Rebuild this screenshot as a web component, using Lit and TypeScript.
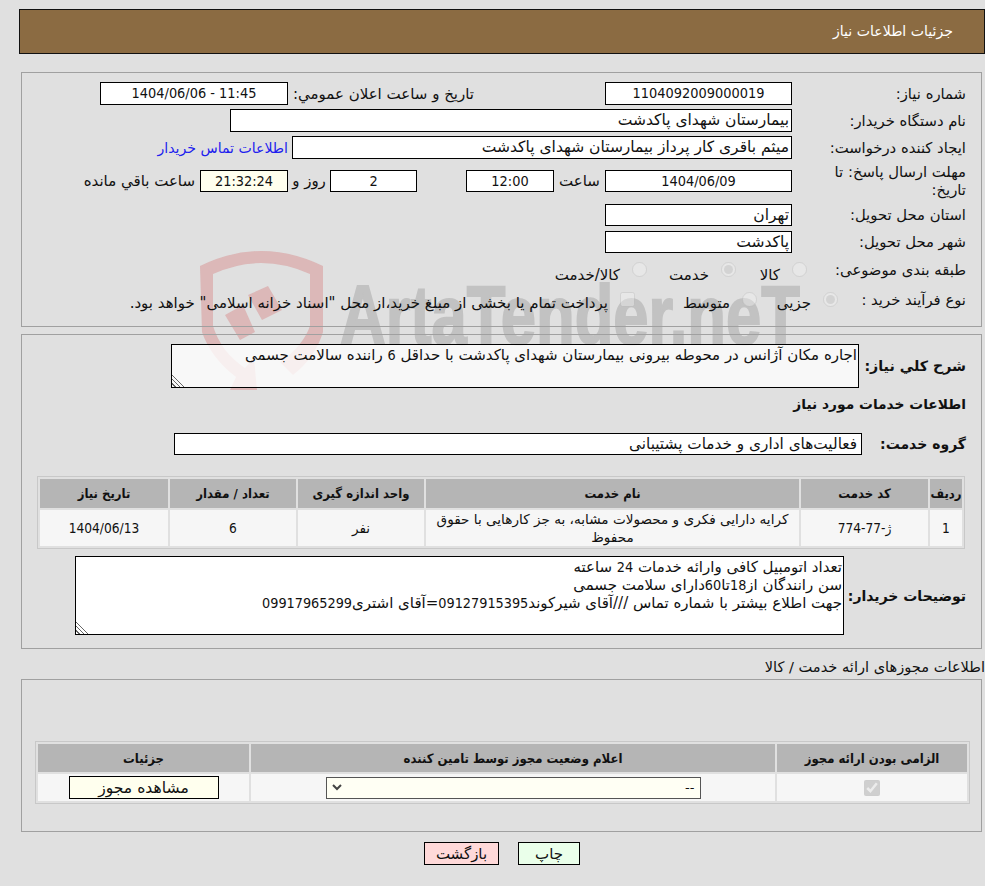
import { LitElement, html, css } from "lit";
import { customElement } from "lit/decorators.js";

const CHEVRON =
  "data:image/svg+xml,%3Csvg xmlns='http://www.w3.org/2000/svg' width='10' height='7'%3E%3Cpath d='M1 1l4 4 4-4' fill='none' stroke='%23444' stroke-width='2'/%3E%3C/svg%3E";

@customElement("app-root")
export class AppRoot extends LitElement {
  static styles = css`
    :host {
      display: block;
      position: relative;
      width: 985px;
      height: 886px;
      overflow: hidden;
      background: #e0e0e0;
      color: #111;
      direction: rtl;
      font-family: "DejaVu Sans", sans-serif;
      font-size: 15px;
    }
    .num {
      font-family: "DejaVu Sans Condensed", "DejaVu Sans", sans-serif;
      font-size: 14.3px;
    }
    .mark {
      position: absolute;
      left: 190px;
      top: 240px;
      width: 620px;
      height: 160px;
      direction: ltr;
    }
    .mark text {
      font-family: "Liberation Sans", sans-serif;
      font-weight: 700;
      font-size: 84px;
      fill: #c2c2c2;
      stroke: #c2c2c2;
      stroke-width: 2px;
    }
    .page {
      position: relative;
      padding-top: 9px;
    }
    .title {
      box-sizing: border-box;
      height: 45px;
      margin: 0 0 0 19px;
      padding: 0 31px;
      line-height: 43px;
      border: 1px solid #111;
      background: #8b6b42;
      color: #fff;
      font-size: 14.1px;
    }
    .panel {
      box-sizing: border-box;
      margin: 0 3px 0 21px;
      border: 1px solid #a0a0a0;
    }
    .top {
      height: 255px;
      margin-top: 18px;
      padding: 9px 15px 0 0;
    }
    .row {
      display: flex;
      align-items: center;
      height: 23px;
      margin-bottom: 4px;
    }
    .label {
      flex: none;
      width: 174px;
      line-height: 18px;
      font-size: 14.8px;
      white-space: nowrap;
    }
    .box {
      flex: none;
      box-sizing: border-box;
      height: 23px;
      line-height: 21px;
      padding: 0 2px;
      border: 1px solid #000;
      background: #fff;
      font-size: 15.5px;
      white-space: nowrap;
      overflow: hidden;
    }
    .box.num {
      font-size: 14.4px;
    }
    .box.h22 {
      height: 22px;
      line-height: 20px;
    }
    .short {
      height: 22px;
      margin-bottom: 5px;
    }
    .center {
      text-align: center;
    }
    .cream {
      background: #ffffee;
    }
    .w187 {
      width: 187px;
    }
    .w88 {
      width: 88px;
    }
    .after {
      margin-right: 5px;
    }
    .link {
      margin-right: 4px;
      color: #2020ee;
      font-size: 14.1px;
    }
    .deadline {
      height: 36px;
      margin-bottom: 5px;
    }
    .choice {
      display: flex;
      align-items: center;
      height: 23px;
    }
    .choice input {
      flex: none;
      width: 15px;
      height: 15px;
      margin: 0;
      opacity: 0.55;
    }
    .choice span {
      position: relative;
      top: 5px;
      margin-right: 12px;
      white-space: nowrap;
    }
    .choice.low span {
      top: 3px;
    }
    .main {
      height: 315px;
      margin-top: 7px;
      padding: 9px 15px 0 16px;
    }
    .bold {
      flex: none;
      font-weight: 700;
      font-size: 14px;
      white-space: nowrap;
    }
    .wide {
      display: flex;
      align-items: center;
    }
    .area {
      box-sizing: border-box;
      padding: 1px 1px 0;
      border: 1px solid #000;
      color: #111;
      line-height: 18px;
      overflow: hidden;
      resize: both;
      white-space: nowrap;
    }
    .area::-webkit-resizer {
      background: linear-gradient(
        45deg,
        transparent 2px,
        #666 2px 3px,
        transparent 3px 5px,
        #666 5px 6px,
        transparent 6px 8px,
        #666 8px 9px,
        transparent 9px
      );
    }
    .need {
      width: 688px;
      height: 44px;
      background: rgba(255, 255, 255, 0.78);
    }
    .subhead {
      margin: 6px 0 0;
      line-height: 20px;
      font-size: 13.8px;
    }
    .group {
      margin-top: 19px;
    }
    .group .box {
      width: 688px;
      height: 22px;
      line-height: 20px;
      padding: 0 4px;
      font-size: 15.3px;
    }
    table {
      box-sizing: border-box;
      border: 1px solid #c8c8c8;
      border-spacing: 2px;
      border-collapse: separate;
      table-layout: fixed;
    }
    th {
      padding: 0;
      background: #b5b5b5;
      font-family: "DejaVu Sans Condensed", "DejaVu Sans", sans-serif;
      font-size: 13px;
      font-weight: 700;
    }
    td {
      padding: 0 3px;
      background: #f6f6f6;
      font-size: 13.6px;
      text-align: center;
      line-height: 18px;
    }
    td.num {
      font-size: 13.6px;
    }
    .services {
      width: 928px;
      margin: 21px 1px 0 0;
    }
    .services th {
      height: 29px;
    }
    .services td {
      height: 36px;
    }
    .notes-row {
      margin-top: 7px;
    }
    .notes {
      width: 769px;
      height: 79px;
      background: #fff;
    }
    .permits-title {
      height: 30px;
      line-height: 35px;
      font-size: 14.6px;
      white-space: nowrap;
    }
    .permits {
      height: 153px;
      padding: 61px 11px 0 13px;
    }
    .permits table {
      width: 935px;
    }
    .permits th {
      height: 28px;
    }
    .permits td {
      height: 27px;
      padding: 0;
    }
    .permits input {
      display: block;
      width: 16px;
      height: 16px;
      margin: 0 auto;
    }
    select {
      display: block;
      box-sizing: border-box;
      width: 375px;
      height: 22px;
      margin: 0 auto;
      padding: 0 5px;
      border: 1px solid #555;
      border-radius: 0;
      appearance: none;
      background: #fffff4 no-repeat 5px center;
      color: #111;
      font: inherit;
      font-size: 13px;
    }
    .view {
      display: block;
      width: 150px;
      height: 23px;
      margin: 0 auto;
      padding: 0;
      border: 1px solid #000;
      background: #ffffee;
      color: #111;
      font: inherit;
      font-size: 15.6px;
    }
    .actions {
      display: flex;
      justify-content: center;
      gap: 19px;
      margin-top: 10px;
      padding-left: 19px;
    }
    .actions button {
      box-sizing: border-box;
      height: 23px;
      padding: 0;
      border: 1px solid #000;
      color: #111;
      font: inherit;
    }
    .print {
      width: 62px;
      background: #eaffea;
    }
    .back {
      width: 75px;
      background: #ffd9d9;
    }
  `;

  render() {
    return html`
      <svg class="mark" viewBox="0 0 620 160" aria-hidden="true">
        <path
          d="M10 26 Q71 -4 133 26 L133 92 Q125 118 103 135 L90 122 Q113 106 120 86 L120 34 Q71 12 23 34 L23 86 Q31 112 55 128 L64 118 L67 150 L40 150 L46 137 Q21 118 12 92 Z"
          fill="#d88f8f"
          opacity="0.5"
        />
        <path d="M35 75 L53 65 L65 92 L50 100 Z M58 55 L78 46 L92 70 L72 80 Z" fill="#d88f8f" opacity="0.5" />
        <text x="150" y="104" textLength="460" lengthAdjust="spacingAndGlyphs">ArtaTender.neT</text>
      </svg>
      <div class="page">
        <div class="title">جزئیات اطلاعات نیاز</div>

        <div class="panel top">
          <div class="row">
            <div class="label">شماره نیاز:</div>
            <div class="box w187 center num">1104092009000019</div>
            <div style="width:131px"></div>
            <div style="width:186px">تاریخ و ساعت اعلان عمومي:</div>
            <div class="box center num" style="width:188px">11:45 - 1404/06/06</div>
          </div>
          <div class="row">
            <div class="label">نام دستگاه خریدار:</div>
            <div class="box" style="width:562px">بیمارستان شهدای پاکدشت</div>
          </div>
          <div class="row">
            <div class="label">ایجاد کننده درخواست:</div>
            <div class="box" style="width:500px">میثم باقری کار پرداز بیمارستان شهدای پاکدشت</div>
            <div class="link">اطلاعات تماس خریدار</div>
          </div>
          <div class="row deadline">
            <div class="label">مهلت ارسال پاسخ: تا<br />تاریخ:</div>
            <div class="box w187 center num h22">1404/06/09</div>
            <div style="width:51px;text-align:center">ساعت</div>
            <div class="box w88 center num h22">12:00</div>
            <div style="width:49px"></div>
            <div class="box center num h22" style="width:87px">2</div>
            <div style="width:42px;text-align:center">روز و</div>
            <div class="box w88 center cream num h22">21:32:24</div>
            <div class="after">ساعت باقي مانده</div>
          </div>
          <div class="row short">
            <div class="label">استان محل تحویل:</div>
            <div class="box w187 h22">تهران</div>
          </div>
          <div class="row short">
            <div class="label">شهر محل تحویل:</div>
            <div class="box w187 h22">پاکدشت</div>
          </div>
          <div class="row" style="margin-top:5px">
            <div class="label" style="width:159px">طبقه بندی موضوعی:</div>
            <div class="choice">
              <input type="radio" disabled />
              <span style="width:44px">کالا</span>
              <input type="radio" checked disabled />
              <span style="width:62px">خدمت</span>
              <input type="radio" disabled />
              <span>کالا/خدمت</span>
            </div>
          </div>
          <div class="row" style="margin-top:7px">
            <div class="label" style="width:128px">نوع فرآیند خرید :</div>
            <div class="choice low">
              <input type="radio" checked disabled />
              <span style="width:54px">جزیی</span>
              <input type="radio" disabled />
              <span style="width:95px">متوسط</span>
              <input type="checkbox" disabled />
              <span>پرداخت تمام یا بخشی از مبلغ خرید،از محل "اسناد خزانه اسلامی" خواهد بود.</span>
            </div>
          </div>
        </div>

        <div class="panel main">
          <div class="wide">
            <div class="bold" style="width:107px;font-size:14.2px">شرح کلي نیاز:</div>
            <div class="area need">
              اجاره مکان آژانس در محوطه بیرونی بیمارستان شهدای پاکدشت با حداقل <span class="num">6</span> راننده سالامت جسمی
            </div>
          </div>
          <div class="bold subhead">اطلاعات خدمات مورد نیاز</div>
          <div class="wide group">
            <div class="bold" style="width:104px">گروه خدمت:</div>
            <div class="box">فعالیت‌های اداری و خدمات پشتیبانی</div>
          </div>
          <table class="services">
            <colgroup>
              <col style="width:32px" />
              <col style="width:127px" />
              <col style="width:373px" />
              <col style="width:126px" />
              <col style="width:126px" />
              <col />
            </colgroup>
            <tr>
              <th>ردیف</th>
              <th>کد خدمت</th>
              <th>نام خدمت</th>
              <th>واحد اندازه گیری</th>
              <th>تعداد / مقدار</th>
              <th>تاریخ نیاز</th>
            </tr>
            <tr>
              <td class="num">1</td>
              <td class="num">ژ-77-774</td>
              <td>کرایه دارایی فکری و محصولات مشابه، به جز کارهایی با حقوق محفوظ</td>
              <td>نفر</td>
              <td class="num">6</td>
              <td class="num">1404/06/13</td>
            </tr>
          </table>
          <div class="wide notes-row">
            <div class="bold" style="width:122px">توضیحات خریدار:</div>
            <div class="area notes">
              <div>تعداد اتومبیل کافی وارائه خدمات <span class="num">24</span> ساعته</div>
              <div>سن رانندگان از<span class="num">18</span>تا<span class="num">60</span>دارای سلامت جسمی</div>
              <div>جهت اطلاع بیشتر با شماره تماس ///آقای شیرکوند<span class="num">09127915395</span>=آقای اشتری<span class="num">09917965299</span></div>
            </div>
          </div>
        </div>

        <div class="permits-title">اطلاعات مجوزهای ارائه خدمت / کالا</div>
        <div class="panel permits">
          <table>
            <colgroup>
              <col style="width:190px" />
              <col style="width:524px" />
              <col />
            </colgroup>
            <tr>
              <th>الزامی بودن ارائه مجوز</th>
              <th>اعلام وضعیت مجوز توسط تامین کننده</th>
              <th>جزئیات</th>
            </tr>
            <tr>
              <td><input type="checkbox" checked disabled /></td>
              <td>
                <select style="background-image:url(&quot;${CHEVRON}&quot;)"><option>--</option></select>
              </td>
              <td><button class="view">مشاهده مجوز</button></td>
            </tr>
          </table>
        </div>

        <div class="actions">
          <button class="print">چاپ</button>
          <button class="back">بازگشت</button>
        </div>
      </div>
    `;
  }
}
